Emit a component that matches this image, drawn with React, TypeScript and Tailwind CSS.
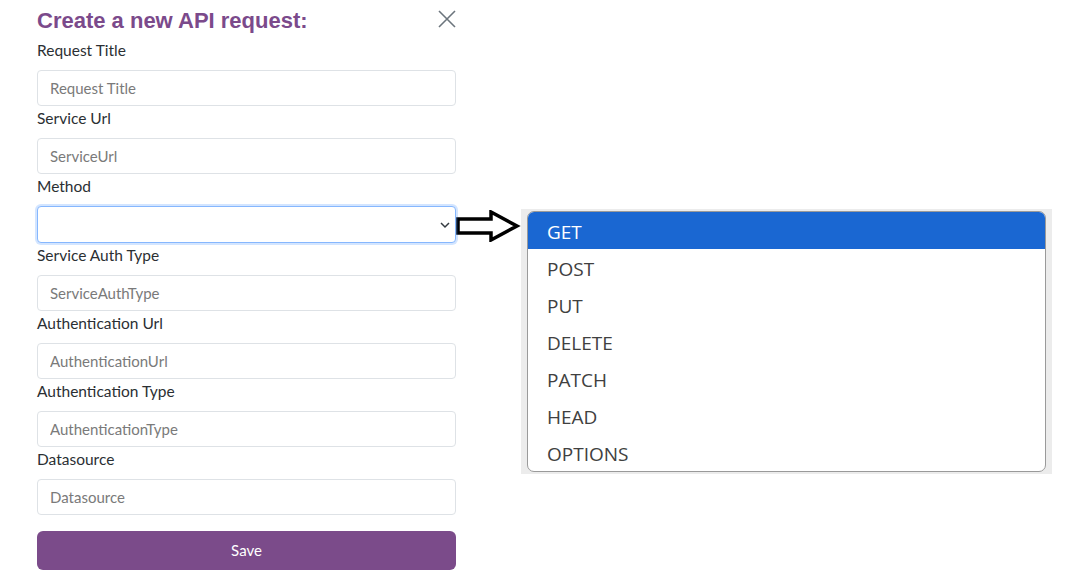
import React from 'react';

const FIELDS_TOP = [
  { label: 'Request Title', placeholder: 'Request Title' },
  { label: 'Service Url', placeholder: 'ServiceUrl' },
];

const FIELDS_BOTTOM = [
  { label: 'Service Auth Type', placeholder: 'ServiceAuthType' },
  { label: 'Authentication Url', placeholder: 'AuthenticationUrl' },
  { label: 'Authentication Type', placeholder: 'AuthenticationType' },
  { label: 'Datasource', placeholder: 'Datasource' },
];

const METHODS = ['GET', 'POST', 'PUT', 'DELETE', 'PATCH', 'HEAD', 'OPTIONS'];

const labelCls = "block h-6 mb-2 text-[15.5px] leading-6 text-[#2b2f33] font-['Lato',sans-serif]";

const Field: React.FC<{ label: string; placeholder: string }> = ({ label, placeholder }) => (
  <div>
    <label className={labelCls}>{label}</label>
    <input
      placeholder={placeholder}
      className="block w-full h-[36px] px-3 rounded-[4px] border border-[#dee2e6] bg-white text-[15px] font-['Lato',sans-serif] placeholder:text-[#7a7a7a] outline-none"
    />
  </div>
);

const App: React.FC = () => {
  return (
    <div className="w-[1066px] h-[576px] bg-white flex overflow-hidden">
      <div className="w-[456px] pl-[37px] shrink-0">
        <div className="flex items-start justify-between h-[38px] pt-[6px]">
          <h2 className="text-[22px] leading-[30px] font-bold text-[#7b4a8b] font-['Liberation_Sans',sans-serif]">
            Create a new API request:
          </h2>
          <svg width="18" height="18" viewBox="0 0 18 18" className="mt-[4px]" fill="none" stroke="#6c757d" strokeWidth="1.6">
            <path d="M1 1 L17 17 M17 1 L1 17" />
          </svg>
        </div>
        {FIELDS_TOP.map(f => <Field key={f.label} {...f} />)}
        <div>
          <label className={labelCls}>Method</label>
          <div className="relative h-[37px] rounded-[4px] border border-[#86b7fe] shadow-[0_0_0_2px_rgba(13,110,253,0.18)] bg-white">
            <svg width="10" height="7" viewBox="0 0 10 7" className="absolute right-[5px] top-[15px]" fill="none" stroke="#343a40" strokeWidth="1.5">
              <path d="M1 1 L5 5 L9 1" />
            </svg>
          </div>
        </div>
        {FIELDS_BOTTOM.map(f => <Field key={f.label} {...f} />)}
        <button className="mt-4 w-full h-[39px] rounded-[6px] bg-[#7b4b8a] text-white text-[15px] font-['Lato',sans-serif]">
          Save
        </button>
      </div>

      <div className="flex items-start mt-[209px]">
        <svg width="65" height="32" viewBox="0 0 65 32" className="mt-[1px]">
          <path d="M2 9 H35 V2 L61 16 L35 30 V23 H2 Z" fill="white" stroke="black" strokeWidth="3.5" strokeLinejoin="miter" />
        </svg>
        <div className="w-[531px] h-[265px] bg-[#ececec] px-[6px] pt-[2px]">
          <div className="h-[261px] bg-white border border-[#9a9a9a] rounded-[7px] overflow-hidden font-['Open_Sans',sans-serif]">
            {METHODS.map((m, i) => (
              <div
                key={m}
                className={`h-[37px] pl-[19px] pt-[3px] flex items-center text-[19px] ${i === 0 ? 'bg-[#1a67d2] text-white' : 'text-[#404040]'}`}
              >
                {m}
              </div>
            ))}
          </div>
        </div>
      </div>
    </div>
  );
};

export default App;
